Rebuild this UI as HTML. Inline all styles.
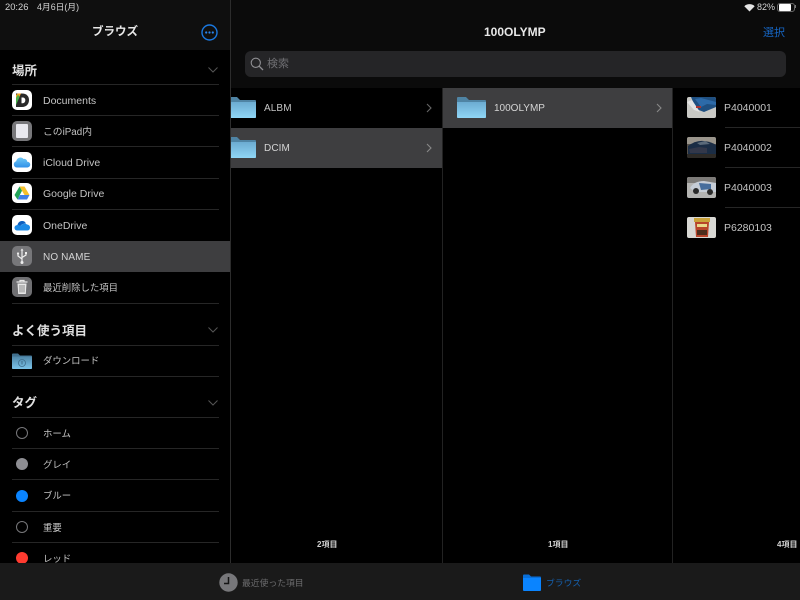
<!DOCTYPE html>
<html lang="ja"><head><meta charset="utf-8"><style>
html,body{margin:0;padding:0;background:#000}
#p{position:relative;width:800px;height:600px;overflow:hidden;background:#000;font-family:"Liberation Sans","Noto Sans CJK JP",sans-serif;color:#d8d8d8;filter:blur(.3px)}
#p div,#p svg,#p span.t{position:absolute}
.t{white-space:nowrap;line-height:14px;font-size:10.5px;color:#c4c4c4}
.j{font-size:9.4px}
.u{font-size:10px;letter-spacing:.1px}
.h{white-space:nowrap;font-size:12.5px;font-weight:700;color:#e0e0e0;left:12px;line-height:18px;position:absolute}
.s{position:absolute;left:12px;width:207px;height:1px;background:#262626}
.ic{left:12px;width:20px;height:20px;border-radius:5px;background:#fff}
.tag{left:16px;width:12px;height:12px;border-radius:50%;box-sizing:border-box}
.cnt{font-size:8px;font-weight:700;color:#d0d0d0;white-space:nowrap;position:absolute;line-height:10px}
.th{left:687px;width:29px;height:21px;border-radius:2px;overflow:hidden}
</style></head><body><div id="p">

<div style="left:0;top:0;width:230px;height:50px;background:#0f0f0f"></div>
<div style="left:231px;top:0;width:569px;height:88px;background:#0b0b0b"></div>
<div style="left:230px;top:0;width:1px;height:563px;background:#2c2c2c"></div>
<div style="left:442px;top:88px;width:1px;height:475px;background:#222"></div>
<div style="left:672px;top:88px;width:1px;height:475px;background:#222"></div>

<span class="t" style="left:5px;top:0;font-size:9.400px;color:#d4d4d4">20:26</span>
<span class="t" style="left:37px;top:0;font-size:8.800px;color:#d4d4d4">4月6日(月)</span>
<svg style="left:744px;top:3px" width="11" height="9" viewBox="0 0 11 9"><path d="M5.500 8.500 L0.300 3.200 A7.500 7.500 0 0 1 10.700 3.200Z" fill="#e4e4e4"/></svg>
<span class="t" style="left:757px;top:0;font-size:9px;color:#d4d4d4">82%</span>
<div style="left:777px;top:3px;width:16px;height:7px;border:1px solid #666;border-radius:3px"></div>
<div style="left:779px;top:4px;width:12px;height:7px;background:#fff;border-radius:1px"></div>
<div style="left:795px;top:5px;width:1px;height:3px;background:#777"></div>

<span class="t" style="left:92px;top:25px;font-size:11.500px;font-weight:700;color:#e8e8e8">ブラウズ</span>
<svg style="left:201px;top:24px" width="17" height="17" viewBox="0 0 17 17"><circle cx="8.500" cy="8.500" r="7.500" fill="none" stroke="#1a78e0" stroke-width="1.400"/><circle cx="5.200" cy="8.500" r="1.100" fill="#2a86ee"/><circle cx="8.500" cy="8.500" r="1.100" fill="#2a86ee"/><circle cx="11.800" cy="8.500" r="1.100" fill="#2a86ee"/></svg>
<span class="t" style="left:484px;top:25px;font-size:12px;font-weight:700;color:#e8e8e8">100OLYMP</span>
<span class="t" style="left:763px;top:26px;font-size:11px;color:#1666c4">選択</span>

<div style="left:245px;top:51px;width:541px;height:26px;background:#252527;border-radius:6px"></div>
<svg style="left:250px;top:57px" width="14" height="14" viewBox="0 0 14 14"><circle cx="5.800" cy="5.800" r="4.600" fill="none" stroke="#8e8e92" stroke-width="1.100"/><path d="M9.200 9.200L13 13" stroke="#8e8e92" stroke-width="1.300"/></svg>
<span class="t" style="left:267px;top:57px;font-size:11px;color:#6f6f73">検索</span>

<div class="h" style="top:62px">場所</div>
<svg style="left:208px;top:67px" width="10" height="6" viewBox="0 0 10 6"><path d="M.5.5L5 5 9.500.5" fill="none" stroke="#555" stroke-width="1"/></svg>
<div class="s" style="top:84px"></div>
<div class="s" style="top:115px"></div>
<div class="s" style="top:146px"></div>
<div class="s" style="top:178px"></div>
<div class="s" style="top:209px"></div>
<div class="s" style="top:303px"></div>
<div style="left:0;top:240.500px;width:230px;height:31.500px;background:#3e3e40"></div>

<div class="ic" style="top:90px"></div>
<svg style="left:12px;top:90px" width="20" height="20" viewBox="0 0 20 20"><path d="M4 3.500h6c4.800 0 7 3 7 6.500s-2.200 7-7 7H4z" fill="#2a2a2a"/><path d="M9.500 7.500h.8c2 0 3 1 3 2.700s-1 3-3 3h-.8z" fill="#fff"/><path d="M4 14L9 3.500H5.500L4 5z" fill="#f0a020"/><path d="M4 15L7.500 7 6 4.500 4 8z" fill="#46b04a"/></svg>
<span class="t" style="left:43px;top:94px">Documents</span>

<div class="ic" style="top:121px;background:#77777a"></div>
<div style="left:16px;top:124px;width:12px;height:14px;background:#e8e8ee;border-radius:1px"></div>
<span class="t" style="left:43px;top:126px;font-size:9.800px">このiPad内</span>

<div class="ic" style="top:152px"></div>
<svg style="left:12px;top:152px" width="20" height="20" viewBox="0 0 20 20"><defs><linearGradient id="a" x1="0" y1="0" x2="0" y2="1"><stop offset="0" stop-color="#6fc8f5"/><stop offset="1" stop-color="#2f90e8"/></linearGradient></defs><path d="M5 15.500a3.200 3.200 0 0 1-.800-6.300c.800-3.500 5-5 7.300-2.200 2-.500 3.700 1 3.700 2.700a2.900 2.900 0 0 1 .300 5.800z" fill="url(#a)"/></svg>
<span class="t" style="left:43px;top:156px">iCloud Drive</span>

<div class="ic" style="top:183px"></div>
<svg style="left:12px;top:183px" width="20" height="20" viewBox="0 0 20 20"><path d="M7.500 3.500h5l5 8.500h-5z" fill="#f6c02c"/><path d="M5.500 16.500L8 12h9.500L15 16.500z" fill="#3f7fe8"/><path d="M7.500 3.500L10 7.800 5.500 16.500 2.500 12z" fill="#23a45a"/></svg>
<span class="t" style="left:43px;top:187px">Google Drive</span>

<div class="ic" style="top:215px"></div>
<svg style="left:12px;top:215px" width="20" height="20" viewBox="0 0 20 20"><path d="M5.500 11.500c-.500-3 2-6 5-5.500 2 0 3 1.500 3.500 2.500-3 0-5 1-6 3.500z" fill="#0c5fc0"/><path d="M5 15.500a2.700 2.700 0 0 1-.500-5.300c1.500-.800 3 0 4 1 1-1.800 4-3.500 6.500-1.700 2 .200 3 1.500 3 3s-1 3-2.500 3z" fill="#1c8ae6"/></svg>
<span class="t" style="left:43px;top:219px">OneDrive</span>

<div class="ic" style="top:246px;background:#77777a"></div>
<svg style="left:12px;top:246px" width="20" height="20" viewBox="0 0 20 20"><path d="M10 3.500V17M10 13L6 10V8M10 11.500L14 9V7.500" fill="none" stroke="#eee" stroke-width="1.200"/><circle cx="10" cy="16.500" r="1.500" fill="#eee"/><circle cx="6" cy="7.500" r="1.100" fill="#eee"/><rect x="13" y="6" width="2" height="2" fill="#eee"/><path d="M8.500 4.500L10 2.500 11.500 4.500z" fill="#eee"/></svg>
<span class="t u" style="left:43px;top:251px;color:#d4d4d4">NO NAME</span>

<div class="ic" style="top:277px;background:#6f6f72"></div>
<svg style="left:12px;top:277px" width="20" height="20" viewBox="0 0 20 20"><path d="M4.500 5h11M8 5V3.500h4V5" fill="none" stroke="#e8e8e8" stroke-width="1.200"/><path d="M5.500 6.500h9l-.7 10.500H6.200z" fill="#e8e8e8"/><path d="M8 8v7.500M10 8v7.500M12 8v7.500" stroke="#6f6f72" stroke-width=".8"/></svg>
<span class="t j" style="left:43px;top:281px">最近削除した項目</span>

<div class="h" style="top:322px">よく使う項目</div>
<svg style="left:208px;top:327px" width="10" height="6" viewBox="0 0 10 6"><path d="M.5.5L5 5 9.500.5" fill="none" stroke="#555" stroke-width="1"/></svg>
<div class="s" style="top:345px"></div>
<div class="s" style="top:376px"></div>
<svg style="left:11px;top:352px" width="22" height="18" viewBox="0 0 22 18"><defs><linearGradient id="f" x1="0" y1="0" x2="0" y2="1"><stop offset="0" stop-color="#4f86a8"/><stop offset="1" stop-color="#7cc4ea"/></linearGradient></defs><path d="M1 2.500q0-1 1-1h5l2 2h11q1 0 1 1V16q0 1-1 1H2q-1 0-1-1z" fill="#41708e"/><path d="M1 4.500h20V16q0 1-1 1H2q-1 0-1-1z" fill="url(#f)"/><circle cx="11" cy="11" r="3.500" fill="none" stroke="#3f6e8c" stroke-width=".8"/><path d="M11 9v3.500" stroke="#3f6e8c"/></svg>
<span class="t j" style="left:43px;top:354px">ダウンロード</span>

<div class="h" style="top:394px">タグ</div>
<svg style="left:208px;top:400px" width="10" height="6" viewBox="0 0 10 6"><path d="M.5.5L5 5 9.500.5" fill="none" stroke="#555" stroke-width="1"/></svg>
<div class="s" style="top:417px"></div>
<div class="s" style="top:448px"></div>
<div class="s" style="top:479px"></div>
<div class="s" style="top:511px"></div>
<div class="s" style="top:542px"></div>
<div class="tag" style="top:427px;border:1px solid #77777a"></div>
<span class="t j" style="left:43px;top:427px">ホーム</span>
<div class="tag" style="top:458px;background:#8e8e93"></div>
<span class="t j" style="left:43px;top:458px">グレイ</span>
<div class="tag" style="top:490px;background:#0a84ff"></div>
<span class="t j" style="left:43px;top:489px">ブルー</span>
<div class="tag" style="top:521px;border:1px solid #77777a"></div>
<span class="t j" style="left:43px;top:521px">重要</span>
<div class="tag" style="top:552px;background:#ff3b30"></div>
<span class="t j" style="left:43px;top:552px">レッド</span>

<div style="left:231px;top:128px;width:211px;height:40px;background:#3e3e40"></div>
<div style="left:443px;top:88px;width:229px;height:40px;background:#3e3e40"></div>

<svg style="left:231px;top:96px" width="25" height="23" viewBox="0 0 25 23"><defs><linearGradient id="g" x1="0" y1="0" x2="0" y2="1"><stop offset="0" stop-color="#6cacd2"/><stop offset="1" stop-color="#90d6f6"/></linearGradient></defs><path d="M-2 1h8l3 3h15q1 0 1 1v16q0 1-1 1H-2z" fill="#4f84a4"/><path d="M-2 6h27v15q0 1-1 1H-2z" fill="url(#g)"/></svg>
<span class="t u" style="left:264px;top:102px">ALBM</span>
<svg style="left:426px;top:103px" width="6" height="10" viewBox="0 0 6 10"><path d="M1 1l4 4-4 4" fill="none" stroke="#666" stroke-width="1.100"/></svg>

<svg style="left:231px;top:136px" width="25" height="23" viewBox="0 0 25 23"><path d="M-2 1h8l3 3h15q1 0 1 1v16q0 1-1 1H-2z" fill="#4f84a4"/><path d="M-2 6h27v15q0 1-1 1H-2z" fill="url(#g)"/></svg>
<span class="t u" style="left:264px;top:142px;color:#d4d4d4">DCIM</span>
<svg style="left:426px;top:143px" width="6" height="10" viewBox="0 0 6 10"><path d="M1 1l4 4-4 4" fill="none" stroke="#888" stroke-width="1.100"/></svg>

<svg style="left:457px;top:96px" width="29" height="23" viewBox="0 0 29 23"><path d="M0 2q0-1 1-1h8l3 3h16q1 0 1 1v16q0 1-1 1H1q-1 0-1-1z" fill="#4f84a4"/><path d="M0 6h29v15q0 1-1 1H1q-1 0-1-1z" fill="url(#g)"/></svg>
<span class="t u" style="left:494px;top:102px;color:#d4d4d4;letter-spacing:0">100OLYMP</span>
<svg style="left:656px;top:103px" width="6" height="10" viewBox="0 0 6 10"><path d="M1 1l4 4-4 4" fill="none" stroke="#888" stroke-width="1.100"/></svg>

<svg class="th" style="top:97px" width="29" height="21" viewBox="0 0 29 21"><rect width="29" height="21" fill="#c9c9c5"/><path d="M4 0h25v10l-12 5-8-3z" fill="#1f4f80"/><path d="M8 2l6 8 6-3 9 1V5L14 1z" fill="#2d6aa8"/><path d="M0 5l7 8 6 2-8-12z" fill="#e4e4e4"/><rect x="9" y="9" width="5" height="2" fill="#a33"/></svg>
<span class="t" style="left:724px;top:101px">P4040001</span>
<svg class="th" style="top:137px" width="29" height="21" viewBox="0 0 29 21"><rect width="29" height="21" fill="#55504a"/><rect width="29" height="7" fill="#9a958c"/><path d="M1 9q8-6 16-5t12 4v9H1z" fill="#1b2d45"/><path d="M2 12l10-2 8 1v5H3z" fill="#33384a"/><rect y="17" width="29" height="4" fill="#2d2a26"/><path d="M10 6l8-2 5 3-10 1z" fill="#5b6a7a"/></svg>
<span class="t" style="left:724px;top:141px">P4040002</span>
<svg class="th" style="top:177px" width="29" height="21" viewBox="0 0 29 21"><rect width="29" height="21" fill="#b4b4b2"/><path d="M0 0h29v6H0z" fill="#7d7b78"/><path d="M3 11q4-7 14-7l12 2v9H8z" fill="#c6cdd6"/><path d="M12 6l12 1v5l-10 1z" fill="#466d9c"/><circle cx="9" cy="14" r="3" fill="#2a2a2a"/><circle cx="23" cy="15" r="3" fill="#2a2a2a"/></svg>
<span class="t" style="left:724px;top:181px">P4040003</span>
<svg class="th" style="top:217px" width="29" height="21" viewBox="0 0 29 21"><rect width="29" height="21" fill="#d8d8d4"/><rect x="7" y="1" width="16" height="4" fill="#c9a23a"/><path d="M8 5h14l-1 15H9z" fill="#b8442a"/><rect x="10" y="7" width="10" height="3" fill="#e9d88a"/><rect x="10" y="13" width="10" height="5" fill="#4d2d1c"/></svg>
<span class="t" style="left:724px;top:221px">P6280103</span>
<div style="left:725px;top:127px;width:75px;height:1px;background:#262626"></div>
<div style="left:725px;top:167px;width:75px;height:1px;background:#262626"></div>
<div style="left:725px;top:207px;width:75px;height:1px;background:#262626"></div>

<span class="cnt" style="left:317px;top:540px">2項目</span>
<span class="cnt" style="left:548px;top:540px">1項目</span>
<span class="cnt" style="left:777px;top:540px">4項目</span>

<div style="left:0;top:563px;width:800px;height:37px;background:#1a1a1a"></div>
<svg style="left:219px;top:573px" width="19" height="19" viewBox="0 0 19 19"><circle cx="9.500" cy="9.500" r="9.200" fill="#77777a"/><path d="M9.500 4v6.500H5" fill="none" stroke="#151515" stroke-width="1.500"/></svg>
<span class="t" style="left:242px;top:576px;font-size:8.800px;color:#6c6c6e">最近使った項目</span>
<svg style="left:522px;top:574px" width="20" height="17" viewBox="0 0 20 17"><path d="M1 1.500q0-1 1-1h5l2 2h9q1 0 1 1V5H1z" fill="#0a6fd8"/><path d="M1 4h18v12q0 1-1 1H2q-1 0-1-1z" fill="#0a84ff"/></svg>
<span class="t" style="left:546px;top:576px;font-size:8.800px;color:#1561b0">ブラウズ</span>

</div></body></html>
